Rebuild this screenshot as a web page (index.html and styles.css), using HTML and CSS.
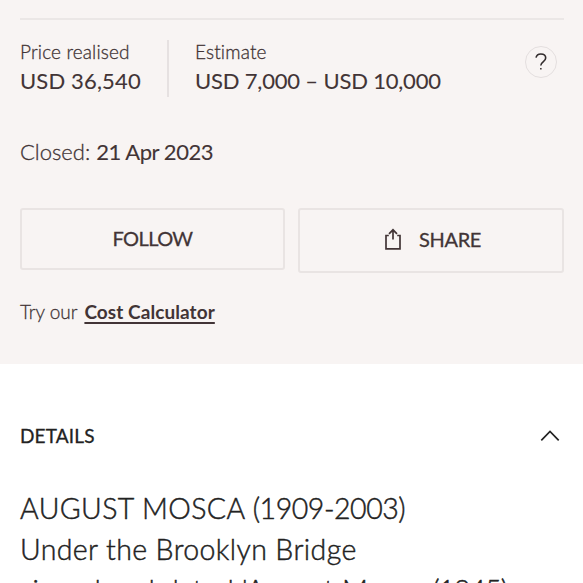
FILE: index.html
```
<!DOCTYPE html>
<html lang="en">
<head>
<meta charset="utf-8">
<title>Lot details</title>
<link rel="stylesheet" href="styles.css">
</head>
<body>
<section class="summary">
  <div class="prices">
    <div class="price realised"><span class="label">Price realised</span><strong class="amount">USD 36,540</strong></div>
    <div class="price estimate"><span class="label">Estimate</span><strong class="amount range">USD 7,000 – USD 10,000</strong></div>
    <button class="help" aria-label="Help"><svg width="14" height="18" viewBox="0 0 14 18"><path d="M2 4.6C2.5 2.4 4.3 1 6.8 1c2.9 0 4.9 1.7 4.9 4.1c0 3.7-4.9 4-4.9 7.3"/><path d="M6.1 15.8h1.5"/></svg></button>
  </div>
  <p class="closed"><span>Closed:</span><strong>21 Apr 2023</strong></p>
  <div class="actions">
    <button class="button follow"><span>FOLLOW</span></button>
    <button class="button share"><svg width="16" height="22" viewBox="0 0 16 22"><path d="M3.8 7.5H1V20.8H15V7.5H12.2M8 11.5V1.8M4 5.8L8 1.8L12 5.8"/></svg><span>SHARE</span></button>
  </div>
  <p class="calculator"><span>Try our</span><a>Cost Calculator</a></p>
</section>
<section class="details">
  <header class="heading"><h2>DETAILS</h2><svg width="20" height="12" viewBox="0 0 20 12"><path d="M1.3 10.4L10 1.5L18.7 10.4"/></svg></header>
  <div class="description">
    <p><span class="artist">AUGUST MOSCA </span><span class="years">(1909-2003)</span></p>
    <p class="title">Under the Brooklyn Bridge</p>
    <p><span class="inscription">signed and dated 'August Mosca </span><span class="date">(1945)</span></p>
  </div>
</section>
</body>
</html>
```
FILE: styles.css
```
* { box-sizing: border-box; }
html, body { height: 100%; overflow: hidden; }
body { margin: 0; background: #fff; color: #222; font-family: Lato, "Open Sans", sans-serif; -webkit-text-stroke: .3px currentColor; }
p, h2 { margin: 0; }
p, span, strong, a { white-space: nowrap; }
svg { fill: none; stroke: currentColor; }
.summary { height: 364px; padding: 18px 19px 0 20px; background: #f8f4f3; color: #423436; }
.prices { display: flex; height: 79px; padding-top: 20px; border-top: 2px solid #ebe7e6; }
.price { display: flex; flex-direction: column; align-items: flex-start; height: 57px; }
.realised { width: 149px; border-right: 2px solid #e6e1e1; }
.estimate { padding-left: 26px; }
.label { font-size: 19px; line-height: 23px; font-weight: 300; letter-spacing: .14px; }
.amount { font-size: 22px; line-height: 35px; font-weight: 400; letter-spacing: .16px; -webkit-text-stroke-width: .1px; }
.range { letter-spacing: -.18px; }
.help { display: flex; align-items: center; justify-content: center; width: 32px; height: 32px; margin: 6px 7px 0 auto; padding: 0; border: 1px solid #e4dfdf; border-radius: 50%; background: none; color: #322c2d; }
.help svg { stroke-width: 1.6; }
.closed { display: flex; gap: 6px; margin-top: 39px; height: 32px; font-size: 22px; line-height: 32px; font-weight: 300; }
.closed strong { font-weight: 400; letter-spacing: -.45px; -webkit-text-stroke-width: .1px; }
.actions { display: grid; grid-template-columns: 265px 266px; justify-content: space-between; align-items: start; margin-top: 40px; height: 65px; }
.button { display: flex; align-items: center; justify-content: center; height: 62px; padding: 0 0 2px; border: 2px solid #e9e4e3; border-radius: 3px; background: none; color: #423436; font: 400 20px/24px Lato, sans-serif; }
.follow { letter-spacing: -.6px; }
.share { height: 65px; gap: 18px; padding: 0 0 3px 4px; letter-spacing: -.3px; }
.share svg { stroke-width: 1.7; }
.calculator { display: flex; gap: 7px; margin-top: 25px; font-size: 19px; line-height: 28px; font-weight: 300; }
.calculator a { font-weight: 700; letter-spacing: .07px; text-decoration: underline; text-decoration-thickness: 2px; text-underline-offset: 3px; -webkit-text-stroke: 0; }
.details { padding: 58px 20px 0; }
.heading { display: flex; justify-content: space-between; align-items: center; height: 28px; padding-right: 3px; }
.heading h2 { font-size: 19px; line-height: 28px; font-weight: 400; letter-spacing: .15px; }
.heading svg { stroke-width: 1.7; }
.description { margin-top: 38px; font-size: 28.5px; line-height: 41px; font-weight: 300; -webkit-text-stroke-width: .45px; }
.artist { letter-spacing: .38px; }
.years { letter-spacing: -.45px; }
.title { letter-spacing: .38px; }
.inscription { letter-spacing: .28px; }
.date { letter-spacing: -1px; }
```
